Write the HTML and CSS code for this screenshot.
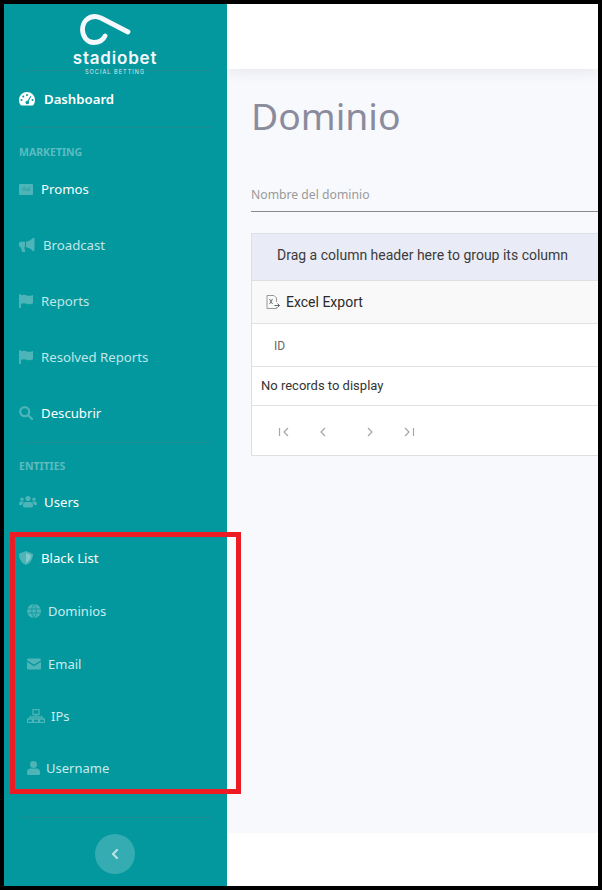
FILE: index.html
```html
<!DOCTYPE html>
<html lang="es">
<head>
<meta charset="utf-8">
<title>Dominio</title>
<link rel="stylesheet" href="styles.css">
</head>
<body>
<div class="frame">
  <aside class="sidebar">
    <div class="brand">
      <svg class="brand-mark" width="56" height="36" viewBox="0 0 56 36"><path d="M27 24C25 28.500 20 30.500 15.500 30.500 9 30.500 4.500 24 4.500 17.500 4.500 10 10 4.500 17 4.500 19.500 4.500 21.500 5.500 24 6.500L50 20" fill="none" stroke="#f4f7fc" stroke-width="4.800" stroke-linecap="round"/></svg>
      <div class="brand-name">stadiobet</div>
      <div class="brand-sub">SOCIAL BETTING</div>
    </div>
    <nav class="nav">
      <a class="item item-dash on">
        <svg class="ico w15" viewBox="0 0 16 14"><path fill="#fff" fill-rule="evenodd" d="M8 0a8 8 0 0 0-8 8c0 1.700.5 3.400 1.400 4.800.3.400.7.600 1.200.600h10.800c.5 0 .9-.2 1.200-.6A8 8 0 0 0 16 8a8 8 0 0 0-8-8zM8 2a1 1 0 1 1 0 2 1 1 0 0 1 0-2zM4.200 3.500a1 1 0 1 1 0 2 1 1 0 0 1 0-2zM2.500 7a1 1 0 1 1 0 2 1 1 0 0 1 0-2zM13.500 7a1 1 0 1 1 0 2 1 1 0 0 1 0-2zM11.400 4l.9.4L9.600 9.200a1.800 1.800 0 1 1-1-.5z"/></svg>
        <span>Dashboard</span>
      </a>
      <div class="rule rule-dash"></div>
      <div class="section sec-market">MARKETING</div>
      <a class="item on">
        <span class="ad">Ad</span>
        <span>Promos</span>
      </a>
      <a class="item dim">
        <svg class="ico w16" viewBox="0 0 16 14"><path class="ic" d="M13.500 0h1c.5 0 1 .4 1 1v11c0 .6-.5 1-1 1h-1C12 10.800 10 9.600 7 9.200V3.800C10 3.400 12 2.200 13.500 0zM6 3.800v5.400H5.200l1 3.700c.1.500-.2 1-.8 1H3.700c-.3 0-.6-.2-.7-.5L1.900 9.200H1.500C.7 9.200 0 8.500 0 7.700V5.300C0 4.500.7 3.800 1.500 3.800z"/></svg>
        <span class="t-broad">Broadcast</span>
      </a>
      <a class="item dim">
        <svg class="ico w14" viewBox="0 0 14 14"><path class="ic" d="M1 0c.5 0 1 .4 1 1v.4C3.200.800 4.300.6 5.500.8c2 .3 3.300 1.300 5.500 1 1-.1 2-.4 3-.9v8.300c-1 .6-2 1-3.200 1.100-2.200.2-3.600-.8-5.500-1C4.200 9.200 3 9.500 2 10v3.500c0 .3-.3.500-.5.500h-1c-.3 0-.5-.2-.5-.5V1c0-.6.500-1 1-1z"/></svg>
        <span>Reports</span>
      </a>
      <a class="item dim">
        <svg class="ico w14" viewBox="0 0 14 14"><path class="ic" d="M1 0c.5 0 1 .4 1 1v.4C3.200.800 4.300.6 5.500.8c2 .3 3.300 1.300 5.500 1 1-.1 2-.4 3-.9v8.300c-1 .6-2 1-3.200 1.100-2.200.2-3.600-.8-5.500-1C4.200 9.200 3 9.500 2 10v3.500c0 .3-.3.500-.5.500h-1c-.3 0-.5-.2-.5-.5V1c0-.6.500-1 1-1z"/></svg>
        <span>Resolved Reports</span>
      </a>
      <a class="item on">
        <svg class="ico w14" viewBox="0 0 14 14"><circle cx="5.700" cy="5.700" r="4.500" fill="none" stroke="#4db4b8" stroke-width="2.200"/><path d="M9 9l4 4" stroke="#4db4b8" stroke-width="2.400" stroke-linecap="round"/></svg>
        <span>Descubrir</span>
      </a>
      <div class="rule rule-ent"></div>
      <div class="section sec-ent">ENTITIES</div>
      <a class="item item-users on">
        <svg class="ico w18" viewBox="0 0 18 13"><circle class="ic" cx="3" cy="3.800" r="1.700"/><circle class="ic" cx="15" cy="3.800" r="1.700"/><circle class="ic" cx="9" cy="3" r="2.600"/><path class="ic" d="M0 8.200C0 6.900.8 6 2 6h2c.4 0 .7.100 1 .3C4 7.100 3.300 8.200 3.100 9.500H1c-.6 0-1-.4-1-1zM18 8.200C18 6.900 17.200 6 16 6h-2c-.4 0-.7.100-1 .3 1 .8 1.700 1.900 1.900 3.200H17c.6 0 1-.4 1-1zM6.500 6.500h5c1.600 0 2.500 1.200 2.500 2.800v1.500c0 .7-.5 1.200-1.200 1.200H5.200C4.500 12 4 11.500 4 10.800V9.300c0-1.600.9-2.800 2.500-2.800z"/></svg>
        <span>Users</span>
      </a>
      <a class="item on">
        <svg class="ico w14" viewBox="0 0 14 14"><path fill="#4db4b8" d="M7 0l6.300 2.400c.4.100.7.500.7.900C14 8.500 11 12.500 7 14 3 12.500 0 8.500 0 3.300c0-.4.300-.8.700-.9z"/><path fill="#80c9cd" d="M7 2v10c2.500-1.300 4.800-4 5-7.800z"/></svg>
        <span>Black List</span>
      </a>
      <a class="item sub s-dom">
        <svg class="ico w14" viewBox="0 0 14 14"><circle class="ic" cx="7" cy="7" r="7"/><path d="M0 5h14M0 9h14M7 0C4 3.500 4 10.500 7 14M7 0c3 3.500 3 10.500 0 14" fill="none" stroke="#029aa0" stroke-width=".8"/></svg>
        <span>Dominios</span>
      </a>
      <a class="item sub s-mail">
        <svg class="ico w14" viewBox="0 0 14 11"><path class="ic" d="M1.300 0h11.400C13.400 0 14 .6 14 1.300v.5L7 6.300 0 1.800v-.5C0 .6.600 0 1.300 0zM0 3.300l7 4.500 7-4.500v6.400c0 .7-.6 1.300-1.300 1.300H1.300C.6 11 0 10.400 0 9.700z"/></svg>
        <span>Email</span>
      </a>
      <a class="item sub s-ip">
        <svg class="ico w18" viewBox="0 0 18 14"><path d="M6 .5h6v5H6zM9 5.500v2.500M3 10.500V8h12v2.500M.5 10h5v3.500h-5zM12.500 10h5v3.500h-5zM6.500 10h5v3.500h-5z" fill="none" stroke="#4db4b8" stroke-width="1.300"/></svg>
        <span>IPs</span>
      </a>
      <a class="item sub s-user">
        <svg class="ico w13" viewBox="0 0 13 14"><circle class="ic" cx="6.500" cy="3.500" r="3.500"/><path class="ic" d="M3.500 7.500h6c2 0 3.500 1.500 3.500 3.500v1.700c0 .7-.6 1.300-1.300 1.300H1.300C.6 14 0 13.400 0 12.700V11c0-2 1.500-3.500 3.500-3.500z"/></svg>
        <span>Username</span>
      </a>
      <div class="rule rule-end"></div>
      <button class="collapse" type="button" aria-label="Collapse">
        <svg width="8" height="10" viewBox="0 0 8 10"><path d="M6 1L2 5l4 4" fill="none" stroke="#b9e2e4" stroke-width="2.200" stroke-linecap="round" stroke-linejoin="round"/></svg>
      </button>
    </nav>
  </aside>
  <main class="main">
    <header class="topbar"></header>
    <section class="content">
      <h1 class="title">Dominio</h1>
      <div class="field">Nombre del dominio</div>
      <div class="grid">
        <div class="group">Drag a column header here to group its column</div>
        <div class="toolbar">
          <svg class="xls" width="14" height="15" viewBox="0 0 14 15"><path d="M1 .5h7l2.500 2.500v4M10.500 12v1.500H1V.5" fill="none" stroke="#8d8d8d" stroke-width=".9"/><path d="M3.500 4l3 5M6.500 4l-3 5" fill="none" stroke="#666" stroke-width=".9"/><path d="M8.500 10.500h5M11.500 8.500l2 2-2 2" fill="none" stroke="#555" stroke-width=".9"/></svg>
          <span>Excel Export</span>
        </div>
        <div class="head">ID</div>
        <div class="norec">No records to display</div>
        <div class="pager">
          <svg class="pg p1" width="12" height="10" viewBox="0 0 12 10"><path d="M2.500 1v8M11 1L7 5l4 4" fill="none" stroke="#a6a6a6" stroke-width="1.200"/></svg>
          <svg class="pg p2" width="12" height="10" viewBox="0 0 12 10"><path d="M8 1L4 5l4 4" fill="none" stroke="#a6a6a6" stroke-width="1.200"/></svg>
          <svg class="pg p3" width="12" height="10" viewBox="0 0 12 10"><path d="M4 1l4 4-4 4" fill="none" stroke="#a6a6a6" stroke-width="1.200"/></svg>
          <svg class="pg p4" width="12" height="10" viewBox="0 0 12 10"><path d="M2 1l4 4-4 4M10.500 1v8" fill="none" stroke="#a6a6a6" stroke-width="1.200"/></svg>
        </div>
      </div>
    </section>
    <footer class="footer"></footer>
  </main>
  <div class="highlight"></div>
</div>
</body>
</html>
```
FILE: styles.css
```css
* { box-sizing: border-box; }
html, body { margin: 0; height: 100%; overflow: hidden; }
body { background: #000; }
.frame {
  position: relative;
  display: flex;
  width: 602px;
  height: 890px;
  border: 4px solid #000;
  background: #fff;
  overflow: hidden;
}
.sidebar {
  flex: 0 0 223px;
  background: #02989e;
  color: #fff;
  font-family: "Noto Sans", sans-serif;
  font-size: 13.200px;
}
.brand {
  height: 67px;
  margin: 0 16px 0 15px;
  display: flex;
  flex-direction: column;
  align-items: center;
  position: relative;
  border-bottom: 1px solid #1f8b92;
}
.brand-mark { margin: 8px 18px 0 0; display: block; flex: none; }
.brand-name {
  font-family: "Inter", sans-serif;
  font-weight: 600;
  font-size: 17px;
  line-height: 18px;
  letter-spacing: .8px;
  color: #f4f7fc;
  margin-top: 1px;
  flex: none;
}
.brand-sub {
  font-family: "Inter", sans-serif;
  font-size: 5.500px;
  line-height: 7px;
  letter-spacing: 1.050px;
  color: #d8eeef;
  position: absolute;
  top: 65px;
  left: 66px;
  white-space: nowrap;
}
.nav { display: flex; flex-direction: column; margin: 0 15px; }
.item {
  display: flex;
  align-items: center;
  height: 56px;
  color: #fff;
  font-weight: 400;
  white-space: nowrap;
}
.item.dim { color: #c0e6e8; }
.item.sub { color: #c9eced; font-size: 13px; height: 52.500px; padding-left: 8px; }
.item-dash { font-weight: 600; }
.ico { display: block; flex: none; margin-right: 8px; }
.w13 { width: 13px; height: 14px; margin-right: 6px; }
.w14 { width: 14px; height: 14px; }
.w15 { width: 16px; height: 14px; margin-right: 9px; }
.w16 { width: 16px; height: 14px; margin-right: 8px; }
.w18 { width: 18px; height: 14px; margin-right: 7px; }
.ic { fill: #4db4b8; }
.ad {
  flex: none;
  width: 14px;
  height: 11px;
  margin-right: 8px;
  background: #4db4b8;
  border-radius: 1px;
  color: #2aa5ab;
  font-size: 6px;
  font-weight: 700;
  line-height: 11px;
  text-align: center;
}
.rule { height: 1px; background: #1f8b92; margin-right: 1px; flex: none; }
.section {
  color: #5dbcc0;
  font-size: 10.500px;
  font-weight: 700;
  line-height: 14px;
  flex: none;
}
.sec-market { margin-top: 17px; margin-bottom: 2px; }
.sec-ent { margin-top: 16px; margin-bottom: 1px; }
.s-dom { margin-top: -1px; }
.s-ip .ico { margin-right: 6px; }
.s-user { margin-top: -1px; }
.s-dom .ico, .s-mail .ico { margin-right: 7px; }
.rule-ent { margin-top: 1px; }
.rule-end { margin-top: 23px; }
.collapse {
  align-self: center;
  width: 40px;
  height: 40px;
  margin: 16px 1px 0 0;
  padding: 0;
  border: 0;
  border-radius: 50%;
  background: #35acb1;
  display: flex;
  align-items: center;
  justify-content: center;
}
.main {
  flex: 1 1 auto;
  min-width: 0;
  display: flex;
  flex-direction: column;
  font-family: "Roboto", sans-serif;
  overflow: hidden;
}
.topbar {
  flex: 0 0 65px;
  background: #fff;
  box-shadow: 0 2px 14px rgba(60, 60, 90, .1);
  position: relative;
}
.content {
  flex: 0 0 764px;
  background: #f8f9fd;
  padding-left: 24px;
}
.footer { flex: 1 1 auto; background: #fff; }
.title {
  margin: 23px 0 0 0;
  font-family: "Noto Sans", sans-serif;
  font-weight: 400;
  font-size: 37.300px;
  line-height: 48px;
  color: #8a8c9e;
}
.field {
  margin-top: 36px;
  height: 36px;
  padding-top: 10px;
  line-height: 18px;
  color: #9a9a9a;
  border-bottom: 1px solid #8a8a8e;
  font-family: "Noto Sans", sans-serif;
  font-size: 12.200px;
}
.grid {
  margin-top: 21px;
  border: 1px solid #dedfe3;
  border-right: 0;
  background: #fff;
  color: #333;
  font-size: 14px;
}
.group {
  height: 47px;
  padding-left: 25px;
  line-height: 42px;
  background: #e9ebf6;
  color: #3b3b3b;
  border-bottom: 1px solid #dedfe3;
}
.toolbar {
  height: 43px;
  display: flex;
  align-items: center;
  padding-left: 14px;
  background: #f9f9f9;
  color: #2b2b2b;
  border-bottom: 1px solid #e2e2e2;
}
.xls { margin-right: 6px; }
.head {
  height: 43px;
  padding-left: 22px;
  line-height: 44px;
  font-size: 12px;
  color: #666;
  border-bottom: 1px solid #e2e2e2;
}
.norec {
  height: 39px;
  padding-left: 9px;
  line-height: 37px;
  font-size: 13px;
  color: #333;
  border-bottom: 1px solid #e2e2e2;
}
.pager {
  height: 49px;
  display: flex;
  align-items: center;
  padding: 2px 0 0 25px;
}
.pg { display: block; flex: none; margin-right: 28px; }
.p2 { margin-right: 35px; }
.p3 { margin-right: 27px; }
.highlight {
  position: absolute;
  left: 6px;
  top: 528px;
  width: 231px;
  height: 262px;
  border: 5px solid #ed1c24;
  pointer-events: none;
}
```
